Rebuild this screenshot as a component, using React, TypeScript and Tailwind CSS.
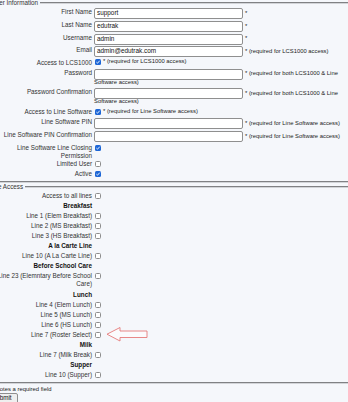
import type { ReactNode } from "react";

function Box({ checked = false }: { checked?: boolean }) {
  if (checked) {
    return (
      <span className="inline-flex h-[6px] w-[6px] shrink-0 items-center justify-center rounded-[1.5px] bg-[#1d66d6]">
        <svg viewBox="0 0 6 6" className="h-[6px] w-[6px]">
          <path d="M1.4 3.1 L2.5 4.2 L4.7 1.7" stroke="#fff" strokeWidth="0.9" fill="none" />
        </svg>
      </span>
    );
  }
  return <span className="inline-block h-[6px] w-[6px] shrink-0 rounded-[1.5px] border-[0.7px] border-[#8d8d8d] bg-white" />;
}

function TextInput({ value = "" }: { value?: string }) {
  return (
    <div className="flex h-[11px] w-[149px] shrink-0 items-center rounded-[2px] border-[0.8px] border-[#8f8f8f] bg-white pl-[2px] text-[6.4px] leading-none text-[#111]">
      {value}
    </div>
  );
}

function Note({ children }: { children: ReactNode }) {
  return <span className="ml-[2px] whitespace-nowrap text-[5.85px] leading-none text-[#222]">{children}</span>;
}

function Row({
  label,
  h,
  bold = false,
  children,
}: {
  label: ReactNode;
  h: string;
  bold?: boolean;
  children?: ReactNode;
}) {
  return (
    <div className={`flex ${h}`}>
      <div
        className={`w-[104px] shrink-0 pt-[1px] text-right leading-[8px] ${
          bold ? "font-bold text-[#111]" : "text-[#333]"
        }`}
      >
        {label}
      </div>
      <div className="ml-[2px] flex-1">{children}</div>
    </div>
  );
}

function InputRow({ value, note }: { value?: string; note: ReactNode }) {
  return (
    <div className="flex items-center pt-[1px]">
      <TextInput value={value} />
      <Note>{note}</Note>
    </div>
  );
}

function CheckCell({ checked, note }: { checked?: boolean; note?: string }) {
  return (
    <div className="flex items-center pl-[1px] pt-[1.5px]">
      <Box checked={checked} />
      {note && <Note>{note}</Note>}
    </div>
  );
}

const lineGroups: { title: string; lines: string[] }[] = [
  { title: "Breakfast", lines: ["Line 1 (Elem Breakfast)", "Line 2 (MS Breakfast)", "Line 3 (HS Breakfast)"] },
  { title: "A la Carte Line", lines: ["Line 10 (A La Carte Line)"] },
  { title: "Before School Care", lines: ["Line 23 (Elemntary Before School Care)"] },
  {
    title: "Lunch",
    lines: ["Line 4 (Elem Lunch)", "Line 5 (MS Lunch)", "Line 6 (HS Lunch)", "Line 7 (Roster Select)"],
  },
  { title: "Milk", lines: ["Line 7 (Milk Break)"] },
  { title: "Supper", lines: ["Line 10 (Supper)"] },
];

export default function App() {
  return (
    <div className="relative h-[402px] w-[348px] overflow-hidden bg-[#f5f7fb] font-['Liberation_Sans',Arial,sans-serif] text-[6.3px] text-[#333]">
      <form className="-ml-[16px] w-[384px]">
        <fieldset className="-mt-[1px] border-2 border-[#d2d4d8] pb-[2px] pl-[2px] [border-style:groove]">
          <legend className="pl-[3.5px] pr-[1.5px] leading-[8px] text-[#333]">User Information</legend>

          <Row label="First Name" h="h-[13px]">
            <InputRow value="support" note="*" />
          </Row>
          <Row label="Last Name" h="h-[12.5px]">
            <InputRow value="edutrak" note="*" />
          </Row>
          <Row label="Username" h="h-[12.5px]">
            <InputRow value="admin" note="*" />
          </Row>
          <Row label="Email" h="h-[12.5px]">
            <InputRow value="admin@edutrak.com" note="* (required for LCS1000 access)" />
          </Row>
          <Row label="Access to LCS1000" h="h-[10px]">
            <CheckCell checked note="* (required for LCS1000 access)" />
          </Row>
          <Row label="Password" h="h-[19.5px]">
            <InputRow note="* (required for both LCS1000 & Line" />
            <div className="-mt-[1px] whitespace-nowrap text-[5.85px] leading-[6px] text-[#222]">Software access)</div>
          </Row>
          <Row label="Password Confirmation" h="h-[20px]">
            <InputRow note="* (required for both LCS1000 & Line" />
            <div className="-mt-[1px] whitespace-nowrap text-[5.85px] leading-[6px] text-[#222]">Software access)</div>
          </Row>
          <Row label="Access to Line Software" h="h-[10px]">
            <CheckCell checked note="* (required for Line Software access)" />
          </Row>
          <Row label="Line Software PIN" h="h-[13px]">
            <InputRow note="* (required for Line Software access)" />
          </Row>
          <Row label="Line Software PIN Confirmation" h="h-[13px]">
            <InputRow note="* (required for Line Software access)" />
          </Row>
          <Row label="Line Software Line Closing Permission" h="h-[16px]">
            <CheckCell checked />
          </Row>
          <Row label="Limited User" h="h-[10px]">
            <CheckCell />
          </Row>
          <Row label="Active" h="h-[10px]">
            <CheckCell checked />
          </Row>
        </fieldset>

        <fieldset className="border-2 border-[#d2d4d8] pb-[2px] pl-[2px] [border-style:groove]">
          <legend className="px-[1.5px] leading-[8px] text-[#333]">Line Access</legend>

          <Row label="Access to all lines" h="h-[10px]">
            <CheckCell />
          </Row>
          {lineGroups.map((group) => (
            <div key={group.title}>
              <Row label={group.title} h="h-[10px]" bold />
              {group.lines.map((line) => (
                <Row key={line} label={line} h={line.length > 32 ? "h-[19px]" : "h-[10px]"}>
                  <CheckCell />
                </Row>
              ))}
            </div>
          ))}
        </fieldset>

        <div className="ml-[2px] mt-[1px] text-[5.9px] leading-[8px] text-[#222]">* denotes a required field</div>
        <button
          type="button"
          className="ml-[2px] h-[11px] rounded-[2px] border-[0.8px] border-[#8f8f8f] bg-[#efefef] px-[5px] text-[6.3px] leading-none text-[#111]"
        >
          Submit
        </button>
      </form>

      <svg className="absolute left-[105px] top-[325px] h-[19px] w-[45px]" viewBox="0 0 45 19">
        <path
          d="M2 9.2 L15 2.5 L15 6 L42 6 L42 12.5 L15 12.5 L15 16 Z"
          fill="#fbfbfd"
          stroke="#e57b7b"
          strokeWidth="0.9"
          strokeLinejoin="round"
        />
      </svg>
    </div>
  );
}
